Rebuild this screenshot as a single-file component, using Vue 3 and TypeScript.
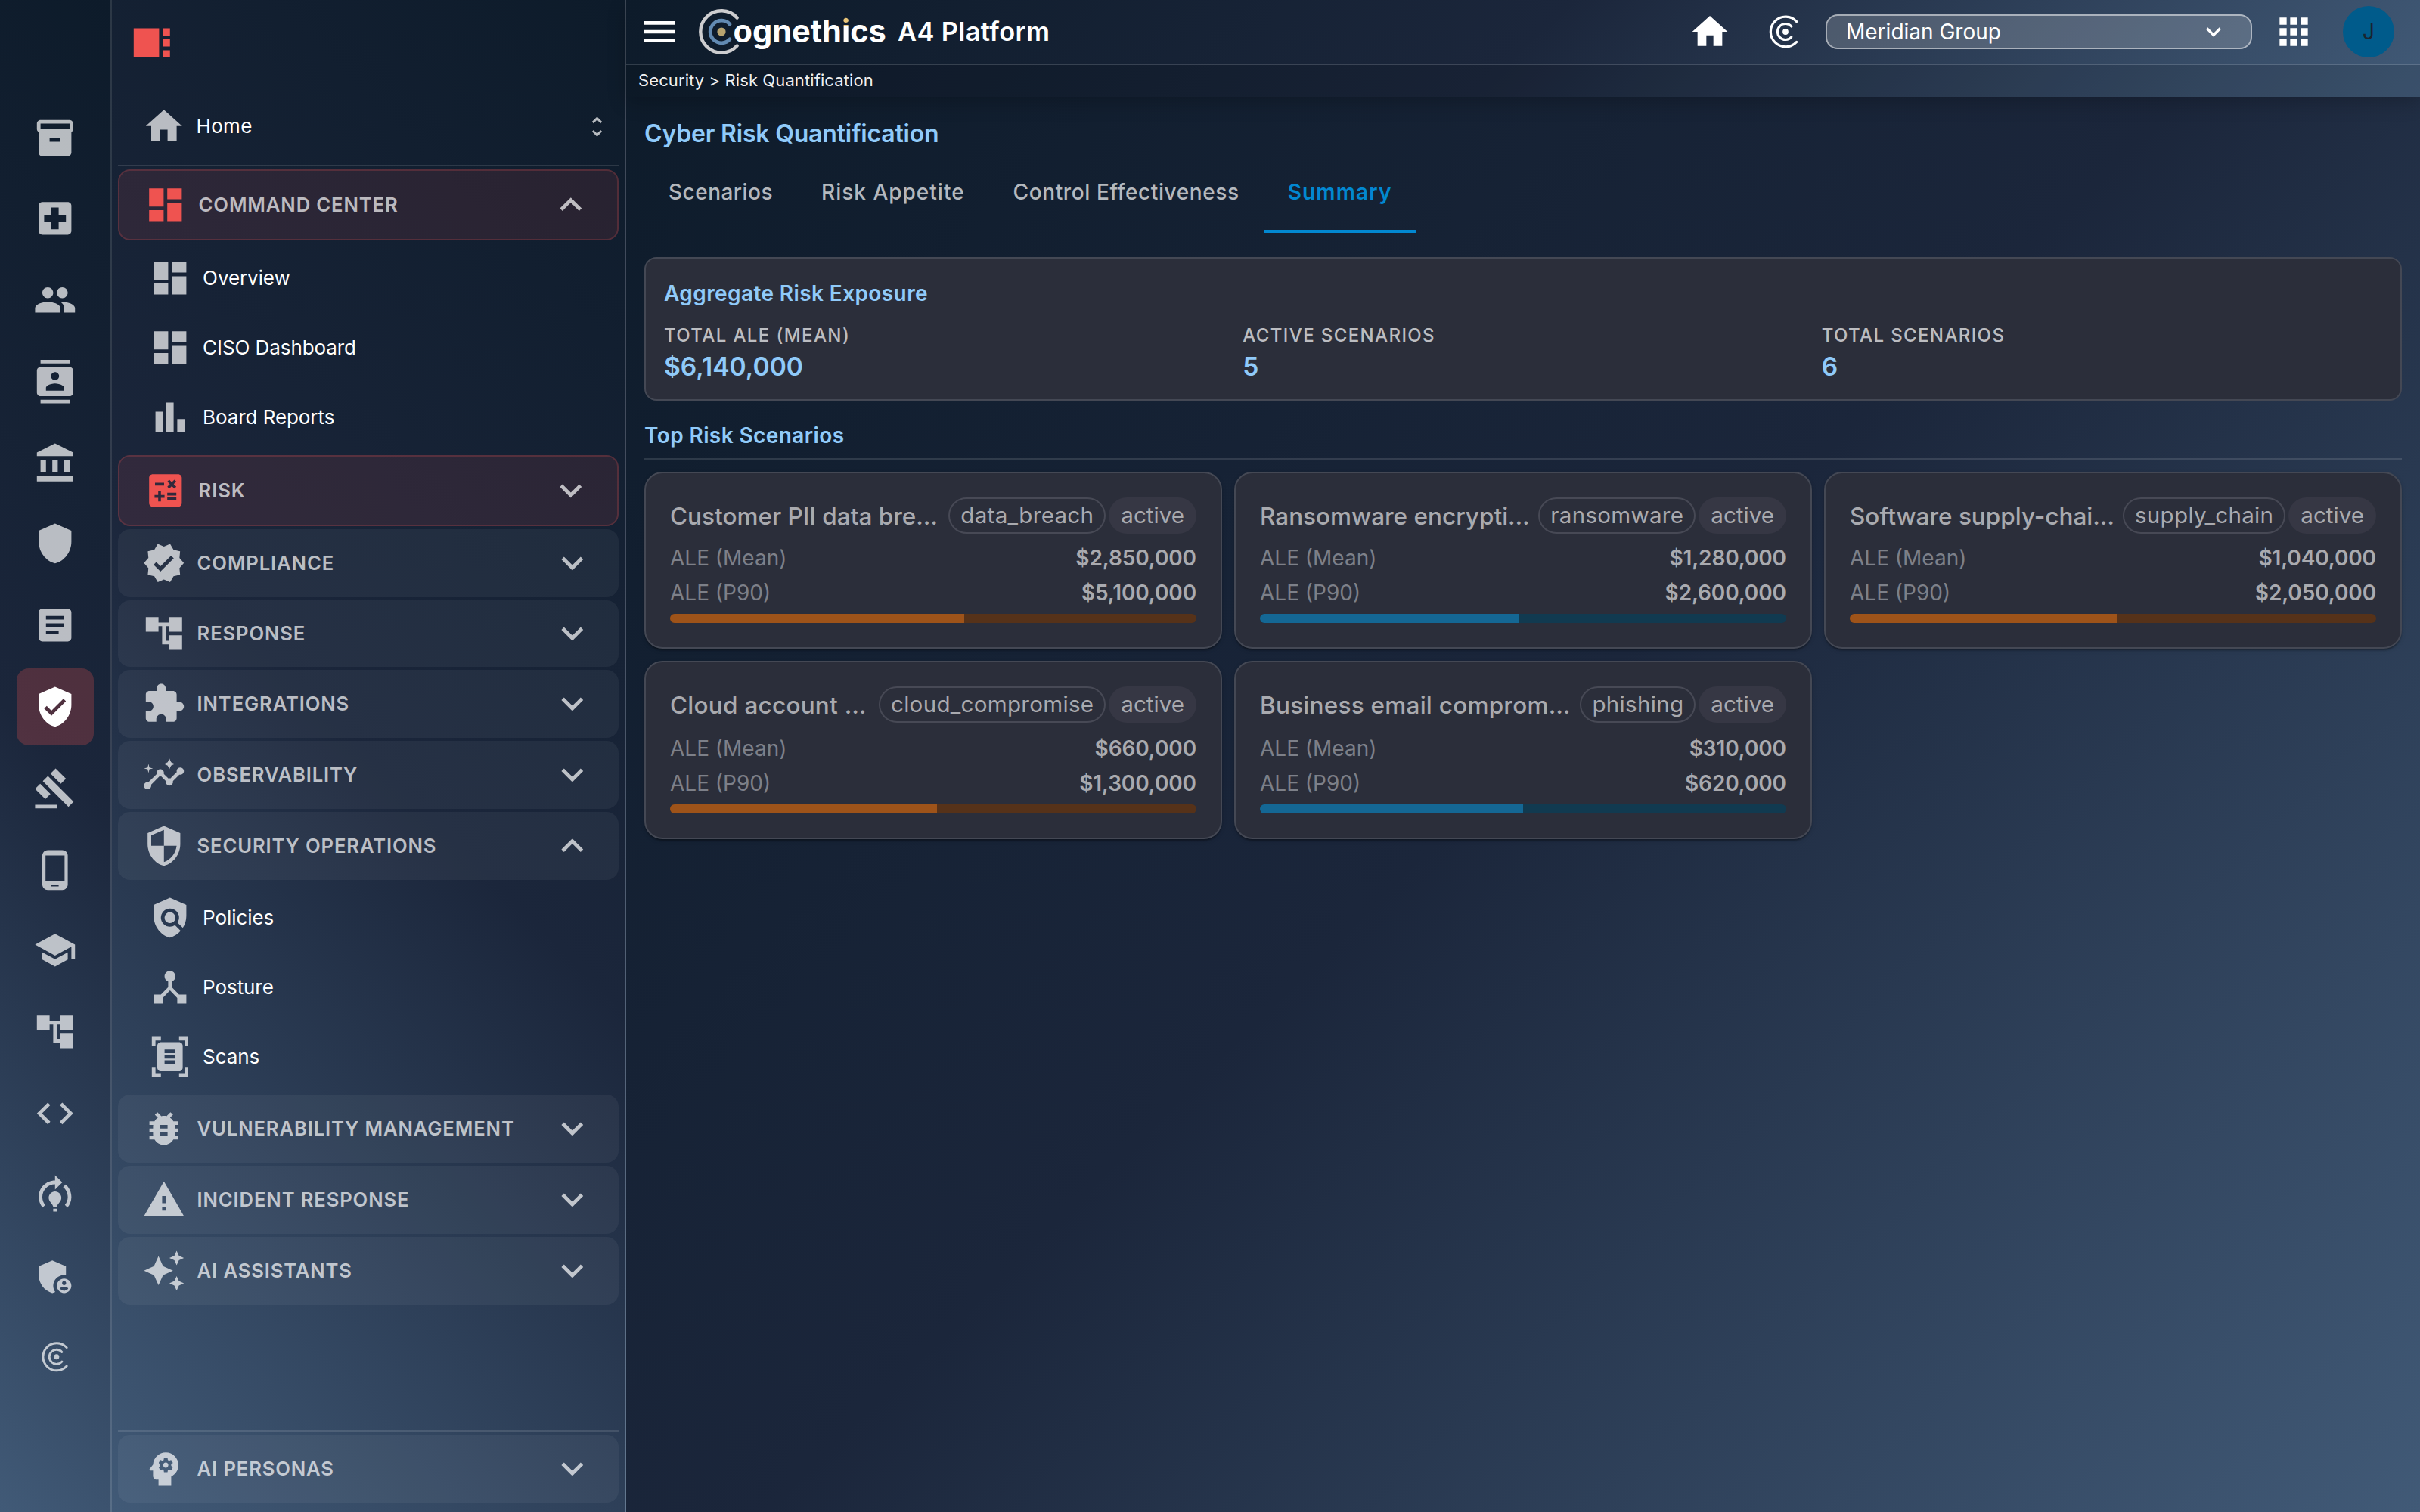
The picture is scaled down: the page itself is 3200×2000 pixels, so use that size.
<script setup lang="ts">
interface NavChild { icon: string; label: string }
interface NavGroup { icon: string; label: string; accent?: boolean; open?: boolean; compact?: boolean; children?: NavChild[] }
interface Scenario { title: string; type: string; status: string; mean: number; p90: number; tone: 'warning' | 'info' }

const SHIELD = 'M12 1L3 5v6c0 5.55 3.84 10.74 9 12 5.16-1.26 9-6.45 9-12V5l-9-4z'

const icons: Record<string, string> = {
  sidebar: 'M16 20H2V4h14v16zM18 8h4V4h-4v4zm0 12h4v-4h-4v4zm0-6h4v-4h-4v4z',
  archive: 'M20 2H4c-1 0-2 .9-2 2v3.01c0 .72.43 1.34 1 1.69V20c0 1.1 1.1 2 2 2h14c.9 0 2-.9 2-2V8.7c.57-.35 1-.97 1-1.69V4c0-1.1-1-2-2-2zm-5 12H9v-2h6v2zm5-7H4V4h16v3z',
  hospital: 'M19 3H5c-1.1 0-1.99.9-1.99 2L3 19c0 1.1.9 2 2 2h14c1.1 0 2-.9 2-2V5c0-1.1-.9-2-2-2zm-1 11h-4v4h-4v-4H6v-4h4V6h4v4h4v4z',
  people: 'M16 11c1.66 0 2.99-1.34 2.99-3S17.66 5 16 5c-1.66 0-3 1.34-3 3s1.34 3 3 3zm-8 0c1.66 0 2.99-1.34 2.99-3S9.66 5 8 5C6.34 5 5 6.34 5 8s1.34 3 3 3zm0 2c-2.33 0-7 1.17-7 3.5V19h14v-2.5c0-2.33-4.67-3.5-7-3.5zm8 0c-.29 0-.62.02-.97.05 1.16.84 1.97 1.97 1.97 3.45V19h6v-2.5c0-2.33-4.67-3.5-7-3.5z',
  contacts: 'M20 0H4v2h16V0zM4 24h16v-2H4v2zM20 4H4c-1.1 0-2 .9-2 2v12c0 1.1.9 2 2 2h16c1.1 0 2-.9 2-2V6c0-1.1-.9-2-2-2zm-8 2.75c1.24 0 2.25 1.01 2.25 2.25s-1.01 2.25-2.25 2.25S9.75 10.24 9.75 9 10.76 6.75 12 6.75zM17 17H7v-1.5c0-1.67 3.33-2.5 5-2.5s5 .83 5 2.5V17z',
  bank: 'M4 10h3v7H4zM10.5 10h3v7h-3zM2 19h20v3H2zM17 10h3v7h-3zM12 1L2 6v2h20V6z',
  shield: SHIELD,
  article: 'M19 3H5c-1.1 0-2 .9-2 2v14c0 1.1.9 2 2 2h14c1.1 0 2-.9 2-2V5c0-1.1-.9-2-2-2zm-5 14H7v-2h7v2zm3-4H7v-2h10v2zm0-4H7V7h10v2z',
  verifiedUser: SHIELD + 'm-2 16l-4-4 1.41-1.41L10 14.17l6.59-6.59L18 9l-8 8z',
  gavel: 'M1 21h12v2H1zM5.245 8.07l2.83-2.827 14.14 14.142-2.828 2.828zM12.317 1l5.657 5.656-2.83 2.83-5.654-5.66zM3.825 9.485l5.657 5.657-2.828 2.828-5.657-5.657z',
  phone: 'M16 1H8C6.34 1 5 2.34 5 4v16c0 1.66 1.34 3 3 3h8c1.66 0 3-1.34 3-3V4c0-1.66-1.34-3-3-3zm-2 20h-4v-1h4v1zm3.25-3H6.75V4h10.5v14z',
  school: 'M5 13.18v4L12 21l7-3.82v-4L12 17l-7-3.82zM12 3L1 9l11 6 9-4.91V17h2V9L12 3z',
  tree: 'M22 11V3h-7v3H9V3H2v8h7V8h2v10h4v3h7v-8h-7v3h-2V8h2v3z',
  code: 'M9.4 16.6L4.8 12l4.6-4.6L8 6l-6 6 6 6 1.4-1.4zm5.2 0l4.6-4.6-4.6-4.6L16 6l6 6-6 6-1.4-1.4z',
  training: 'M15.5 13.5c0 2-2.5 3.5-2.5 5h-2c0-1.5-2.5-3-2.5-5 0-1.93 1.57-3.5 3.5-3.5s3.5 1.57 3.5 3.5zM13 19.5h-2V21h2v-1.5zM19 13c0 1.68-.59 3.21-1.58 4.42l1.42 1.42C20.18 17.27 21 15.23 21 13c0-2.74-1.23-5.19-3.16-6.84l-1.42 1.42C17.99 8.86 19 10.82 19 13zM16 5l-4-4v3c-4.97 0-9 4.03-9 9 0 2.23.82 4.27 2.16 5.84l1.42-1.42C5.59 16.21 5 14.68 5 13c0-3.86 3.14-7 7-7v3l4-4z',
  admin: 'M17 11c.34 0 .67.04 1 .09V6.27L10.5 3 3 6.27v4.91c0 4.54 3.2 8.79 7.5 9.82.55-.13 1.08-.32 1.6-.55C11.41 19.47 11 18.28 11 17c0-3.31 2.69-6 6-6zM17 13c-2.21 0-4 1.79-4 4s1.79 4 4 4 4-1.79 4-4-1.79-4-4-4zm0 1.38c.62 0 1.12.51 1.12 1.12s-.51 1.12-1.12 1.12-1.12-.51-1.12-1.12.5-1.12 1.12-1.12zm0 5.37c-.93 0-1.74-.46-2.24-1.17.05-.72 1.51-1.08 2.24-1.08s2.19.36 2.24 1.08c-.5.71-1.31 1.17-2.24 1.17z',
  home: 'M10 20v-6h4v6h5v-8h3L12 3 2 12h3v8z',
  unfold: 'M12 5.83L15.17 9l1.41-1.41L12 3 7.41 7.59 8.83 9 12 5.83zm0 12.34L8.83 15l-1.41 1.41L12 21l4.59-4.59L15.17 15 12 18.17z',
  dashboard: 'M3 13h8V3H3v10zm0 8h8v-6H3v6zm10 0h8V11h-8v10zm0-18v6h8V3h-8z',
  bars: 'M4 9h4v11H4zm12 4h4v7h-4zm-6-9h4v16h-4z',
  calculate: 'M19 3H5c-1.1 0-2 .9-2 2v14c0 1.1.9 2 2 2h14c1.1 0 2-.9 2-2V5c0-1.1-.9-2-2-2zm-5.97 4.06L14.09 6l1.41 1.41L16.91 6l1.06 1.06-1.41 1.41 1.41 1.41-1.06 1.06-1.41-1.4-1.41 1.41-1.06-1.06 1.41-1.41-1.41-1.42zm-6.78.66h5v1.5h-5v-1.5zM11.5 16h-2v2H8v-2H6v-1.5h2v-2h1.5v2h2V16zm6.5 1.25h-5v-1.5h5v1.5zm0-2.5h-5v-1.5h5v1.5z',
  verified: 'M23 12l-2.44-2.79.34-3.69-3.61-.82-1.89-3.2L12 2.96 8.6 1.5 6.71 4.69 3.1 5.5l.34 3.7L1 12l2.44 2.79-.34 3.7 3.61.82L8.6 22.5l3.4-1.47 3.4 1.46 1.89-3.19 3.61-.82-.34-3.69L23 12zm-12.91 4.72l-3.8-3.81 1.48-1.48 2.32 2.33 5.85-5.87 1.48 1.48-7.33 7.35z',
  extension: 'M20.5 11H19V7c0-1.1-.9-2-2-2h-4V3.5C13 2.12 11.88 1 10.5 1S8 2.12 8 3.5V5H4c-1.1 0-1.99.9-1.99 2v3.8H3.5c1.49 0 2.7 1.21 2.7 2.7s-1.21 2.7-2.7 2.7H2V20c0 1.1.9 2 2 2h3.8v-1.5c0-1.49 1.21-2.7 2.7-2.7 1.49 0 2.7 1.21 2.7 2.7V22H17c1.1 0 2-.9 2-2v-4h1.5c1.38 0 2.5-1.12 2.5-2.5S21.88 11 20.5 11z',
  insights: 'M21 8c-1.45 0-2.26 1.44-1.93 2.51l-3.55 3.56c-.3-.09-.74-.09-1.04 0l-2.55-2.55C12.27 10.45 11.46 9 10 9c-1.45 0-2.27 1.44-1.93 2.52l-4.56 4.55C2.44 15.74 1 16.55 1 18c0 1.1.9 2 2 2 1.45 0 2.26-1.44 1.93-2.51l4.55-4.56c.3.09.74.09 1.04 0l2.55 2.55C12.73 16.55 13.54 18 15 18c1.45 0 2.27-1.44 1.93-2.52l3.56-3.55C21.56 12.26 23 11.45 23 10c0-1.1-.9-2-2-2zM15 9l.94-2.07L18 6l-2.06-.93L15 3l-.92 2.07L12 6l2.08.93zM3.5 11L4 9l2-.5L4 8l-.5-2L3 8l-2 .5L3 9z',
  security: SHIELD + 'm0 10.99h7c-.53 4.12-3.28 7.79-7 8.94V12H5V6.3l7-3.11v8.8z',
  policy: 'M21 5l-9-4-9 4v6c0 5.55 3.84 10.74 9 12 2.3-.56 4.33-1.9 5.88-3.71l-3.12-3.12c-1.94 1.29-4.58 1.07-6.29-.64-1.95-1.95-1.95-5.12 0-7.07 1.95-1.95 5.12-1.95 7.07 0 1.71 1.71 1.92 4.35.64 6.29l2.9 2.9C20.29 15.69 21 13.38 21 11V5zM12 9a3 3 0 1 0 0 6a3 3 0 1 0 0-6z',
  hub: 'M17 16l-4-4V8.82C14.16 8.4 15 7.3 15 6c0-1.66-1.34-3-3-3S9 4.34 9 6c0 1.3.84 2.4 2 2.82V12l-4 4H3v5h5v-3.05l4-4.2 4 4.2V21h5v-5h-4z',
  scanner: 'M7 3H4v3H2V1h5v2zm15 3V1h-5v2h3v3h2zM7 21H4v-3H2v5h5v-2zm13-3v3h-3v2h5v-5h-2zM19 18c0 1.1-.9 2-2 2H7c-1.1 0-2-.9-2-2V6c0-1.1.9-2 2-2h10c1.1 0 2 .9 2 2v12zM15 8H9v2h6V8zm0 3H9v2h6v-2zm0 3H9v2h6v-2z',
  bug: 'M20 8h-2.81c-.45-.78-1.07-1.45-1.82-1.96L17 4.41 15.59 3l-2.17 2.17C12.96 5.06 12.49 5 12 5s-.96.06-1.41.17L8.41 3 7 4.41l1.62 1.63C7.88 6.55 7.26 7.22 6.81 8H4v2h2.09c-.05.33-.09.66-.09 1v1H4v2h2v1c0 .34.04.67.09 1H4v2h2.81c1.04 1.79 2.97 3 5.19 3s4.15-1.21 5.19-3H20v-2h-2.09c.05-.33.09-.66.09-1v-1h2v-2h-2v-1c0-.34-.04-.67-.09-1H20V8zm-6 8h-4v-2h4v2zm0-4h-4v-2h4v2z',
  warning: 'M1 21h22L12 2 1 21zm12-3h-2v-2h2v2zm0-4h-2v-4h2v4z',
  sparkle: 'M19 9l1.25-2.75L23 5l-2.75-1.25L19 1l-1.25 2.75L15 5l2.75 1.25L19 9zm-7.5.5L9 4 6.5 9.5 1 12l5.5 2.5L9 20l2.5-5.5L17 12l-5.5-2.5zM19 15l-1.25 2.75L15 19l2.75 1.25L19 23l1.25-2.75L23 19l-2.75-1.25L19 15z',
  psychology: 'M13 8.57c-.79 0-1.43.64-1.43 1.43s.64 1.43 1.43 1.43 1.43-.64 1.43-1.43-.64-1.43-1.43-1.43zM13 3C9.25 3 6.2 5.94 6.02 9.64L4.1 12.2c-.25.33-.01.8.4.8H6v3c0 1.1.9 2 2 2h1v3h7v-4.68c2.36-1.12 4-3.53 4-6.32 0-3.87-3.13-7-7-7zm3 7c0 .13-.01.26-.02.39l.83.66c.08.06.1.16.05.25l-.8 1.39c-.05.09-.16.12-.24.09l-.99-.4c-.21.16-.43.29-.67.39L14 13.83c-.01.1-.1.17-.2.17h-1.6c-.1 0-.18-.07-.2-.17l-.15-1.06c-.25-.1-.47-.23-.68-.39l-.99.4c-.09.03-.2 0-.25-.09l-.8-1.39c-.05-.08-.03-.19.05-.25l.84-.66c-.01-.13-.02-.26-.02-.39s.02-.27.04-.39l-.85-.66c-.08-.06-.1-.16-.05-.26l.8-1.38c.05-.09.15-.12.24-.09l1 .4c.2-.15.43-.29.67-.39L12 6.17c.02-.1.1-.17.2-.17h1.6c.1 0 .18.07.2.17l.15 1.06c.24.1.46.23.67.39l1-.4c.09-.03.2 0 .24.09l.8 1.38c.05.09.03.2-.05.26l-.85.66c.03.12.04.25.04.39z',
  expandMore: 'M16.59 8.59L12 13.17 7.41 8.59 6 10l6 6 6-6z',
  expandLess: 'M12 8l-6 6 1.41 1.41L12 10.83l4.59 4.58L18 14z',
  menu: 'M3 18h18v-2H3v2zm0-5h18v-2H3v2zm0-7v2h18V6H3z',
  apps: 'M4 8h4V4H4v4zm6 12h4v-4h-4v4zm-6 0h4v-4H4v4zm0-6h4v-4H4v4zm6 0h4v-4h-4v4zm6-10v4h4V4h-4zm-6 4h4V4h-4v4zm6 6h4v-4h-4v4zm0 6h4v-4h-4v4z',
}

const rail = ['archive', 'hospital', 'people', 'contacts', 'bank', 'shield', 'article', 'verifiedUser', 'gavel', 'phone', 'school', 'tree', 'code', 'training', 'admin', 'brand']
const activeRail = 'verifiedUser'

const groups: NavGroup[] = [
  {
    icon: 'dashboard', label: 'Command Center', accent: true, open: true,
    children: [
      { icon: 'dashboard', label: 'Overview' },
      { icon: 'dashboard', label: 'CISO Dashboard' },
      { icon: 'bars', label: 'Board Reports' },
    ],
  },
  { icon: 'calculate', label: 'Risk', accent: true },
  { icon: 'verified', label: 'Compliance' },
  { icon: 'tree', label: 'Response', compact: true },
  { icon: 'extension', label: 'Integrations' },
  { icon: 'insights', label: 'Observability' },
  {
    icon: 'security', label: 'Security Operations', open: true,
    children: [
      { icon: 'policy', label: 'Policies' },
      { icon: 'hub', label: 'Posture' },
      { icon: 'scanner', label: 'Scans' },
    ],
  },
  { icon: 'bug', label: 'Vulnerability Management' },
  { icon: 'warning', label: 'Incident Response' },
  { icon: 'sparkle', label: 'AI Assistants' },
]

const tabs = ['Scenarios', 'Risk Appetite', 'Control Effectiveness', 'Summary']
const activeTab = 'Summary'

const stats = [
  { label: 'Total ALE (Mean)', value: '$6,140,000' },
  { label: 'Active Scenarios', value: '5' },
  { label: 'Total Scenarios', value: '6' },
]

const scenarios: Scenario[] = [
  { title: 'Customer PII data bre…', type: 'data_breach', status: 'active', mean: 2850000, p90: 5100000, tone: 'warning' },
  { title: 'Ransomware encrypti…', type: 'ransomware', status: 'active', mean: 1280000, p90: 2600000, tone: 'info' },
  { title: 'Software supply-chai…', type: 'supply_chain', status: 'active', mean: 1040000, p90: 2050000, tone: 'warning' },
  { title: 'Cloud account …', type: 'cloud_compromise', status: 'active', mean: 660000, p90: 1300000, tone: 'warning' },
  { title: 'Business email comprom…', type: 'phishing', status: 'active', mean: 310000, p90: 620000, tone: 'info' },
]

const money = (n: number): string => '$' + n.toLocaleString('en-US')
const share = (s: Scenario): string => ((s.mean / s.p90) * 100).toFixed(2) + '%'
</script>

<template>
  <div class="app">
    <nav class="rail">
      <div v-for="name in rail" :key="name" class="rail-item" :class="{ active: name === activeRail }">
        <svg v-if="name === 'brand'" class="brand-mark" viewBox="0 0 48 48">
          <path d="M38.7 10.6A19.8 19.8 0 1 0 38.7 37.4M31.8 17A10.5 10.5 0 1 0 31.8 31" />
          <circle cx="24" cy="24" r="3.9" />
        </svg>
        <svg v-else class="icon" viewBox="0 0 24 24"><path :d="icons[name]" /></svg>
      </div>
    </nav>

    <aside class="sidebar">
      <div class="sidebar-top">
        <svg class="icon red" viewBox="0 0 24 24"><path :d="icons.sidebar" /></svg>
      </div>
      <div class="home-row">
        <svg class="icon" viewBox="0 0 24 24"><path :d="icons.home" /></svg>
        <span class="nav-text">Home</span>
        <svg class="icon unfold" viewBox="0 0 24 24"><path :d="icons.unfold" /></svg>
      </div>
      <div class="groups">
        <template v-for="g in groups" :key="g.label">
          <div class="group" :class="{ accent: g.accent, compact: g.compact }">
            <svg class="icon" viewBox="0 0 24 24"><path :d="icons[g.icon]" /></svg>
            <span class="group-text">{{ g.label }}</span>
            <svg class="icon chevron" viewBox="0 0 24 24"><path :d="g.open ? icons.expandLess : icons.expandMore" /></svg>
          </div>
          <div v-if="g.open" class="children">
            <div v-for="c in g.children" :key="c.label" class="child">
              <svg class="icon" viewBox="0 0 24 24"><path :d="icons[c.icon]" /></svg>
              <span class="nav-text">{{ c.label }}</span>
            </div>
          </div>
        </template>
      </div>
      <div class="personas">
        <div class="group">
          <svg class="icon" viewBox="0 0 24 24"><path :d="icons.psychology" /></svg>
          <span class="group-text">AI Personas</span>
          <svg class="icon chevron" viewBox="0 0 24 24"><path :d="icons.expandMore" /></svg>
        </div>
      </div>
    </aside>

    <div class="page">
      <header class="header">
        <div class="toolbar">
          <svg class="tool-icon" viewBox="0 0 24 24"><path :d="icons.menu" /></svg>
          <div class="logo">
            <svg class="logo-mark" viewBox="0 0 60 60">
              <path class="ring-outer" d="M50.6 11.5A27.7 27.7 0 1 0 50.6 48.5" />
              <path class="ring-inner" d="M41 20.1A14.8 14.8 0 1 0 41 39.9" />
              <circle cx="30" cy="30" r="5.6" />
            </svg>
            <span class="logo-text">ogneth<span class="dotted">i</span>cs</span>
          </div>
          <span class="product">A4 Platform</span>
          <div class="tools">
            <svg class="tool-icon home" viewBox="0 0 24 24"><path :d="icons.home" /></svg>
            <svg class="brand-mark" viewBox="0 0 48 48">
              <path d="M38.7 10.6A19.8 19.8 0 1 0 38.7 37.4M31.8 17A10.5 10.5 0 1 0 31.8 31" />
              <circle cx="24" cy="24" r="3.9" />
            </svg>
            <div class="select">
              <span>Meridian Group</span>
              <svg viewBox="0 0 24 24"><path :d="icons.expandMore" /></svg>
            </div>
            <svg class="tool-icon apps" viewBox="0 0 24 24"><path :d="icons.apps" /></svg>
            <div class="avatar">J</div>
          </div>
        </div>
        <div class="crumbs">Security &gt; Risk Quantification</div>
      </header>

      <main class="content">
        <h1 class="title">Cyber Risk Quantification</h1>
        <div class="tabs">
          <div v-for="t in tabs" :key="t" class="tab" :class="{ active: t === activeTab }">{{ t }}</div>
        </div>

        <section class="summary">
          <h2 class="heading">Aggregate Risk Exposure</h2>
          <div class="stats">
            <div v-for="s in stats" :key="s.label">
              <div class="stat-label">{{ s.label }}</div>
              <div class="stat-value">{{ s.value }}</div>
            </div>
          </div>
        </section>

        <h2 class="heading list-heading">Top Risk Scenarios</h2>
        <div class="cards">
          <article v-for="s in scenarios" :key="s.type" class="card">
            <div class="card-head">
              <span class="card-title">{{ s.title }}</span>
              <span class="chip outlined">{{ s.type }}</span>
              <span class="chip filled">{{ s.status }}</span>
            </div>
            <div class="row"><span>ALE (Mean)</span><b>{{ money(s.mean) }}</b></div>
            <div class="row"><span>ALE (P90)</span><b>{{ money(s.p90) }}</b></div>
            <div class="bar" :class="s.tone"><div class="fill" :style="{ width: share(s) }"></div></div>
          </article>
        </div>
      </main>
    </div>
  </div>
</template>

<style>
html, body { margin: 0; background: #0d1b2a; }
</style>

<style scoped>
.app {
  display: flex;
  width: 3200px;
  height: 2000px;
  overflow: hidden;
  font-family: Inter, "Liberation Sans", sans-serif;
  color: #fff;
}
.app * { box-sizing: border-box; }
svg { display: block; flex: none; fill: currentColor; }
h1, h2 { margin: 0; }

.icon { width: 57.6px; height: 57.6px; color: rgba(255, 255, 255, 0.7); }
.brand-mark { width: 48px; height: 48px; }
.brand-mark path { fill: none; stroke: currentColor; stroke-width: 3.2; stroke-linecap: round; }

.rail {
  flex: none;
  width: 148px;
  padding-top: 132px;
  border-right: 2px solid rgba(255, 255, 255, 0.12);
  background: linear-gradient(225deg, #0d1b2a 0%, #1b263b 50%, #415a77 100%);
  display: flex;
  flex-direction: column;
  align-items: center;
}
.rail-item {
  width: 102px;
  height: 102px;
  flex: none;
  margin-bottom: 6px;
  border-radius: 16px;
  display: flex;
  align-items: center;
  justify-content: center;
}
.rail-item:first-child, .rail-item:nth-child(5n) { margin-bottom: 4px; }
.rail-item.active { background: rgba(239, 83, 80, 0.25); }
.rail-item.active .icon { color: #fff; }
.rail-item .brand-mark { width: 43.6px; height: 43.6px; margin-left: 3px; color: rgba(255, 255, 255, 0.7); }

.sidebar {
  flex: none;
  width: 680px;
  padding: 0 8px 12px;
  border-right: 2px solid rgba(255, 255, 255, 0.18);
  background: linear-gradient(225deg, #0d1b2a 0%, #1b263b 50%, #415a77 100%);
  display: flex;
  flex-direction: column;
}
.sidebar-top { height: 116px; padding: 28px 0 0 16px; }
.icon.red { color: #ef5350; }
.home-row {
  height: 104px;
  padding: 0 11px 0 32px;
  border-bottom: 2px solid rgba(255, 255, 255, 0.12);
  display: flex;
  align-items: center;
  gap: 14px;
}
.nav-text { font-size: 26px; line-height: 40px; letter-spacing: 0.3px; }
.child .nav-text { letter-spacing: -0.08px; padding-bottom: 1px; }
.unfold { width: 35px; height: 35px; margin-left: auto; }
.groups { display: flex; flex-direction: column; gap: 4px; padding-top: 4px; }
.group {
  height: 90px;
  padding: 0 32px;
  border-radius: 16px;
  background: rgba(255, 255, 255, 0.05);
  display: flex;
  align-items: center;
  gap: 15px;
}
.group.compact { height: 88px; }
.group.accent {
  height: 94px;
  background: rgba(239, 83, 80, 0.11);
  border: 2px solid rgba(239, 83, 80, 0.22);
}
.group.accent .icon:first-child { color: #ef5350; }
.group-text {
  font-size: 25.6px;
  font-weight: 600;
  letter-spacing: 0.88px;
  line-height: 40px;
  text-transform: uppercase;
  color: rgba(255, 255, 255, 0.7);
}
.chevron { margin-left: auto; }
.children { height: 276px; }
.child { height: 92px; padding-left: 40px; display: flex; align-items: center; gap: 14.5px; }
.personas { margin-top: auto; padding-top: 4px; border-top: 2px solid rgba(255, 255, 255, 0.12); }

.page {
  flex: none;
  width: 2372px;
  background: linear-gradient(135deg, #0d1b2a 0%, #1b263b 50%, #415a77 100%);
}
.header {
  position: relative;
  height: 128px;
  background: linear-gradient(135deg, #0d1b2a 0%, #1b263b 50%, #415a77 100%);
  box-shadow: 0 8px 24px rgba(0, 0, 0, 0.2);
}
.toolbar {
  height: 86px;
  padding: 0 34px 0 16px;
  border-bottom: 2px solid rgba(255, 255, 255, 0.15);
  display: flex;
  align-items: center;
}
.tool-icon { width: 56px; height: 56px; }
.logo { margin-left: 24px; width: 250px; display: flex; align-items: center; }
.logo-mark { width: 60px; height: 60px; }
.logo-mark path { fill: none; stroke-linecap: round; }
.ring-outer { stroke: #cdcdcf; stroke-width: 4.4; }
.ring-inner { stroke: #628ab2; stroke-width: 4.8; }
.logo-mark circle { fill: #b8a470; }
.logo-text { margin-left: -14.5px; padding-bottom: 3px; font-size: 41.5px; font-weight: 700; line-height: 52px; }
.dotted {
  background: linear-gradient(#e8c478 0 38%, #fff 38%);
  background-clip: text;
  -webkit-background-clip: text;
  color: transparent;
}
.product { margin-left: 13px; padding-bottom: 1px; font-size: 34.4px; font-weight: 600; letter-spacing: 0.38px; line-height: 48px; }
.tools { margin-left: auto; display: flex; align-items: center; }
.tools .home { margin-right: 48px; }
.select {
  width: 564px;
  height: 46px;
  margin: 0 27px 0 29px;
  padding: 0 29px 0 25px;
  border: 2px solid rgba(255, 255, 255, 0.5);
  border-radius: 16px;
  background: rgba(255, 255, 255, 0.18);
  display: flex;
  align-items: center;
  justify-content: space-between;
  font-size: 28px;
  line-height: 40px;
}
.select > span { padding-bottom: 1px; }
.select svg { width: 40px; height: 40px; }
.apps { margin-right: 37px; }
.avatar {
  width: 68px;
  height: 68px;
  border-radius: 50%;
  background: #005b8b;
  color: #1b2430;
  font-size: 28px;
  line-height: 68px;
  text-align: center;
}
.crumbs {
  height: 42px;
  padding-left: 16px;
  background: rgba(0, 0, 0, 0.1);
  font-size: 22px;
  letter-spacing: 0.1px;
  line-height: 40px;
  color: rgba(255, 255, 255, 0.94);
}

.content { padding: 24px; }
.title {
  font-size: 32px;
  font-weight: 600;
  letter-spacing: -0.2px;
  line-height: 50px;
  color: #90caf9;
}
.tabs { display: flex; margin-top: 2px; }
.tab {
  height: 104px;
  padding: 0 32px;
  border-bottom: 4px solid transparent;
  font-size: 28px;
  font-weight: 500;
  letter-spacing: 0.48px;
  line-height: 100px;
  color: rgba(255, 255, 255, 0.7);
}
.tab:nth-child(2) { letter-spacing: 1px; }
.tab:nth-child(3) { letter-spacing: 0.6px; }
.tab.active { color: #0288d1; border-color: #0288d1; font-weight: 600; letter-spacing: 1.15px; }
.heading { font-size: 28px; font-weight: 600; letter-spacing: 0.4px; line-height: 44px; color: #90caf9; }
.summary {
  height: 190px;
  margin-top: 32px;
  padding: 24px;
  border: 2px solid #444854;
  border-radius: 16px;
  background: #2b2e3a;
}
.stats { display: grid; grid-template-columns: repeat(3, 1fr); gap: 24px; margin-top: 16px; }
.stat-label {
  font-size: 24px;
  font-weight: 500;
  letter-spacing: 1.38px;
  line-height: 36px;
  text-transform: uppercase;
  color: rgba(255, 255, 255, 0.7);
}
.stat-value { font-size: 33.6px; font-weight: 600; line-height: 45px; color: #90caf9; }
.list-heading {
  margin-top: 24px;
  padding-bottom: 8px;
  border-bottom: 2px solid rgba(255, 255, 255, 0.12);
}
.cards { display: grid; grid-template-columns: repeat(3, 1fr); gap: 16px; margin-top: 16px; }
.card {
  padding: 32px;
  border: 2px solid #444854;
  border-radius: 24px;
  background: #2b2e3a;
  box-shadow: 0 4px 2px -2px rgba(0, 0, 0, 0.2), 0 2px 2px rgba(0, 0, 0, 0.14), 0 2px 6px rgba(0, 0, 0, 0.12);
  color: #a9aaaf;
}
.card-head { display: flex; align-items: center; gap: 4px; margin-bottom: 9px; }
.card:nth-child(n + 4) .card-head { margin-bottom: 11px; }
.card-title { flex: 1; min-width: 0; white-space: nowrap; overflow: hidden; font-size: 31.5px; font-weight: 500; line-height: 48px; padding-top: 1px; margin-bottom: -1px; }
.card:nth-child(n + 4) .card-title { letter-spacing: 0.25px; }
.chip { height: 48px; padding: 0 16px; border-radius: 24px; font-size: 29.6px; line-height: 47px; }
.chip.outlined { border: 2px solid #474955; padding: 0 14px; line-height: 43px; letter-spacing: 0.27px; }
.chip.filled { background: #363744; }
.row { display: flex; justify-content: space-between; font-size: 28px; line-height: 46px; color: #7d8089; }
.row b { font-weight: 600; letter-spacing: -0.1px; color: #a9aaaf; }
.bar { height: 12px; margin-top: 5px; border-radius: 6px; overflow: hidden; }
.fill { height: 12px; }
.warning { background: #563219; }
.warning .fill { background: #9e5319; }
.info { background: #113a50; }
.info .fill { background: #146794; }
</style>
